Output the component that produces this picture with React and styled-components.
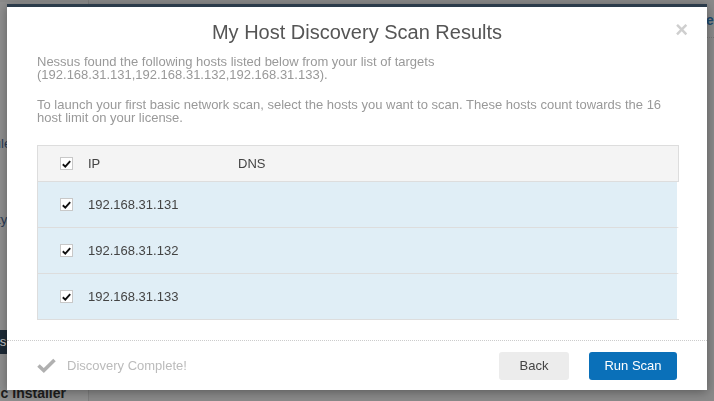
import styled, { createGlobalStyle } from "styled-components";

const GlobalStyle = createGlobalStyle`
    html, body {
        margin: 0;
        padding: 0;
        background: #8a8a8a;
        font-family: "Liberation Sans", Arial, sans-serif;
        overflow: hidden;
    }
`;

const hosts = ["192.168.31.131", "192.168.31.132", "192.168.31.133"];

const Check = () => (
    <svg width="9" height="8" viewBox="0 0 9 8">
        <path d="M0.8 4.2 L3.3 6.6 L8.2 1.2" fill="none" stroke="#111" strokeWidth="1.9" />
    </svg>
);

const App = () => {
    return (
        <>
            <GlobalStyle />
            <Page>
                <Sidebar>
                    <SideTop />
                    <SideItem $top={134} $shift={-43}>Schedule</SideItem>
                    <SideItem $top={60} $shift={-34}>Activity</SideItem>
                    <SideActive>Scans</SideActive>
                    <SideBold>Basic Installer</SideBold>
                </Sidebar>
                <Main>
                    <MainLink>New</MainLink>
                </Main>
            </Page>

            <Modal>
                <Header>
                    <Title>My Host Discovery Scan Results</Title>
                    <Close>×</Close>
                </Header>
                <Body>
                    <Text>
                        Nessus found the following hosts listed below from your list of targets
                        <br />
                        (192.168.31.131,192.168.31.132,192.168.31.133).
                    </Text>
                    <Text>
                        To launch your first basic network scan, select the hosts you want to scan. These hosts count towards the 16 host limit on your license.
                    </Text>
                    <Table>
                        <HeadRow>
                            <CheckCell><Box><Check /></Box></CheckCell>
                            <Cell>IP</Cell>
                            <Cell>DNS</Cell>
                        </HeadRow>
                        {hosts.map((ip) => (
                            <Row key={ip}>
                                <CheckCell><Box><Check /></Box></CheckCell>
                                <Cell>{ip}</Cell>
                                <Cell></Cell>
                            </Row>
                        ))}
                    </Table>
                </Body>
                <Footer>
                    <Status>
                        <svg width="19" height="15" viewBox="0 0 19 15">
                            <path d="M1.5 7.5 L6.8 12.5 L17.5 2" fill="none" stroke="#b0b0b0" strokeWidth="3.6" />
                        </svg>
                        Discovery Complete!
                    </Status>
                    <Buttons>
                        <Button>Back</Button>
                        <Button $primary>Run Scan</Button>
                    </Buttons>
                </Footer>
            </Modal>
        </>
    );
};

export default App;

const Page = styled.div`
    display: flex;
    height: 401px;
    width: 714px;
`;

const Sidebar = styled.div`
    width: 88px;
    flex-shrink: 0;
    background: #8f8f8f;
    border-right: 1px solid #7e7e7e;
    display: flex;
    flex-direction: column;
    overflow: hidden;
`;

const SideTop = styled.div`
    height: 4px;
    background: #8a8a8a;
`;

const SideItem = styled.div`
    margin-top: ${(p) => p.$top}px;
    margin-left: ${(p) => p.$shift}px;
    font-size: 13px;
    color: #2a3a55;
    line-height: 16px;
`;

const SideActive = styled.div`
    margin-top: 102px;
    height: 24px;
    background: #1d2a36;
    color: #c8c8c8;
    font-size: 13px;
    line-height: 24px;
    text-indent: -30px;
`;

const SideBold = styled.div`
    margin-top: 31px;
    margin-left: -29px;
    font-size: 14px;
    font-weight: bold;
    color: #1e1e1e;
    white-space: nowrap;
`;

const Main = styled.div`
    flex: 1;
    background: #8a8a8a;
    display: flex;
    flex-direction: column;
    align-items: flex-end;
`;

const MainLink = styled.div`
    margin-top: 12px;
    margin-right: -22px;
    padding-bottom: 9px;
    font-size: 14px;
    font-weight: bold;
    color: #1f4a6e;
    border-bottom: 1px dotted #777;
    width: 40px;
`;

const Modal = styled.div`
    position: fixed;
    left: 7px;
    top: 4px;
    width: 700px;
    height: 383px;
    background: #fff;
    border-top: 3px solid #2b3b4a;
    box-shadow: 0 2px 10px rgba(0, 0, 0, 0.35);
    display: flex;
    flex-direction: column;
`;

const Header = styled.div`
    position: relative;
    height: 42px;
    display: flex;
    align-items: center;
    justify-content: center;
`;

const Title = styled.h2`
    margin: 8px 0 0;
    font-size: 20px;
    font-weight: normal;
    color: #555;
`;

const Close = styled.span`
    position: absolute;
    right: 19px;
    top: 10px;
    font-size: 22px;
    font-weight: bold;
    color: #cfcfcf;
`;

const Body = styled.div`
    padding: 6px 28px 0 30px;
    flex: 1;
`;

const Text = styled.p`
    margin: 0 0 17px;
    font-size: 13px;
    line-height: 13px;
    color: #999;
`;

const Table = styled.div`
    margin-top: 21px;
    border: 1px solid #ddd;
`;

const HeadRow = styled.div`
    display: grid;
    grid-template-columns: 50px 150px 1fr;
    height: 35px;
    align-items: center;
    background: #f4f4f4;
    border-bottom: 1px solid #ddd;
`;

const Row = styled(HeadRow)`
    height: 45px;
    background: #e0eef6;
    border-right: 2px solid #fff;
    margin-right: -1px;
    &:last-child {
        border-bottom: none;
    }
`;

const CheckCell = styled.div`
    display: flex;
    justify-content: center;
    padding-left: 6px;
`;

const Cell = styled.div`
    font-size: 13px;
    color: #444;
`;

const Box = styled.span`
    width: 11px;
    height: 11px;
    border: 1px solid #c8c8c8;
    background: #fff;
    display: flex;
    align-items: center;
    justify-content: center;
`;

const Footer = styled.div`
    height: 49px;
    border-top: 1px dotted #ccc;
    padding: 0 30px;
    display: flex;
    align-items: center;
    justify-content: space-between;
`;

const Status = styled.div`
    display: flex;
    align-items: center;
    gap: 11px;
    font-size: 13px;
    color: #bbb;
`;

const Buttons = styled.div`
    display: flex;
    gap: 20px;
`;

const Button = styled.button`
    height: 28px;
    padding: 0 ${(p) => (p.$primary ? 15 : 20)}px;
    min-width: ${(p) => (p.$primary ? 88 : 70)}px;
    border: none;
    border-radius: 3px;
    font-family: "Liberation Sans", Arial, sans-serif;
    font-size: 13px;
    color: ${(p) => (p.$primary ? "#fff" : "#444")};
    background: ${(p) => (p.$primary ? "#0a70b9" : "#ececec")};
`;
